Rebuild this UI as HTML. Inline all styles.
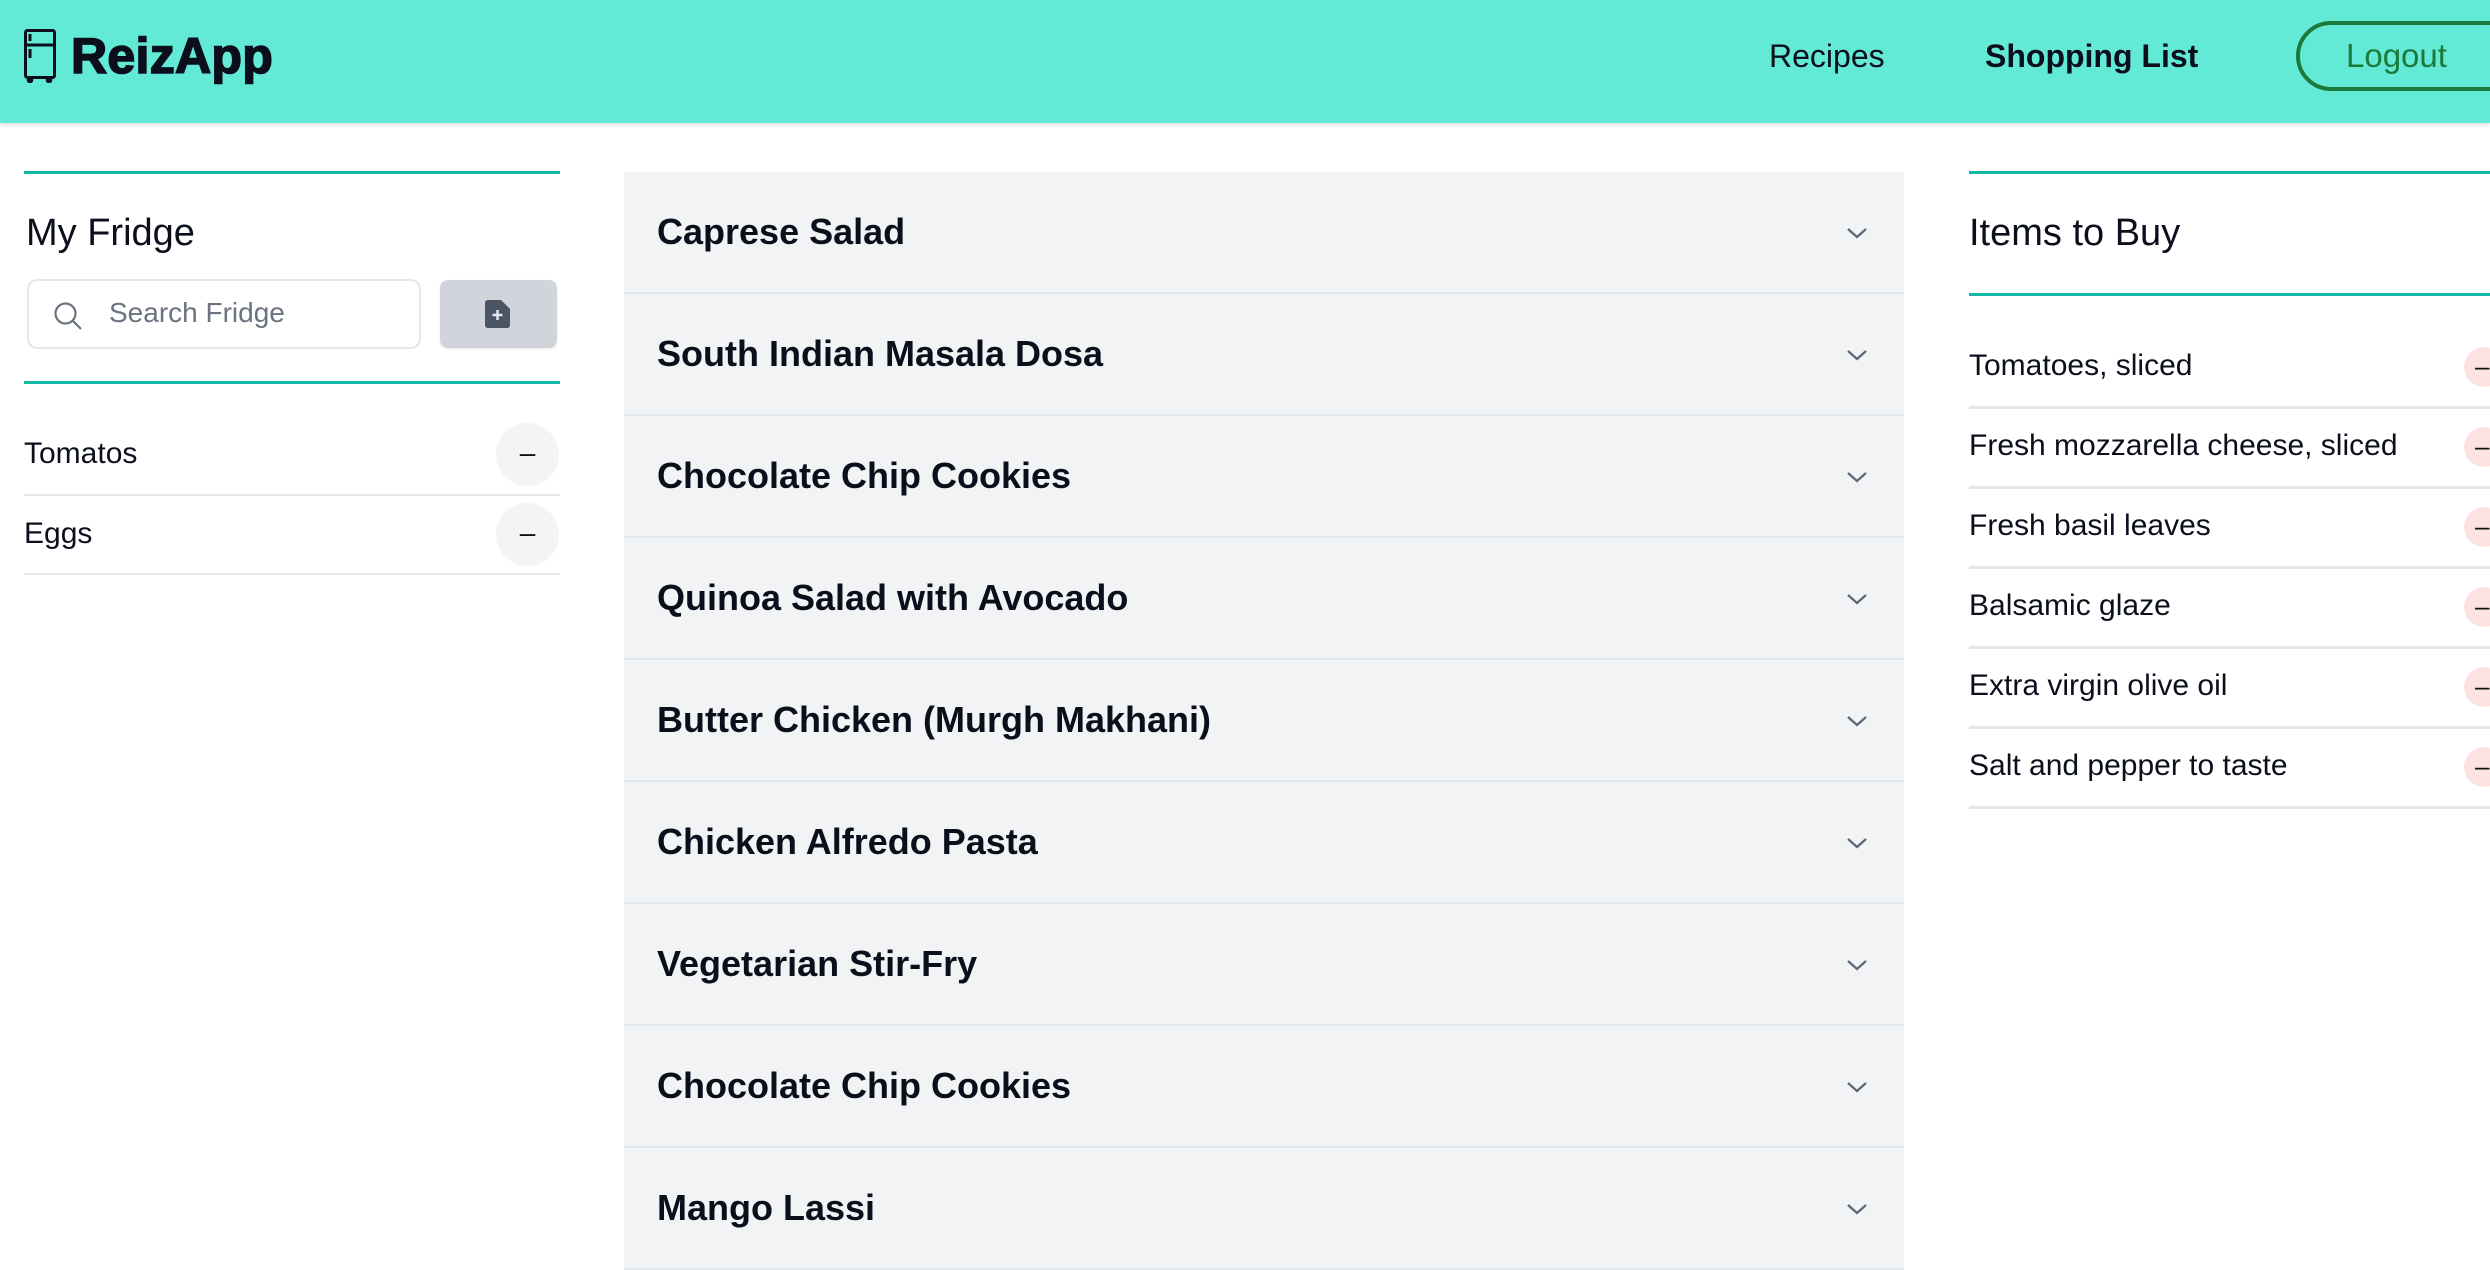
<!DOCTYPE html>
<html><head><meta charset="utf-8"><style>
*{margin:0;padding:0;box-sizing:border-box}
body{width:2490px;height:1268px;overflow:hidden;background:#fff;font-family:"Liberation Sans",Arial,sans-serif;color:#111827;position:relative}
.abs{position:absolute}
header{position:absolute;left:0;top:0;width:2490px;height:123px;background:#62ead7;box-shadow:0 2px 4px rgba(0,0,0,.12)}
.logo{left:71px;top:26px;font-size:50px;font-weight:bold;line-height:60px;color:#0b0f1c;-webkit-text-stroke:1.6px #0b0f1c;letter-spacing:0.3px}
.nav{top:38px;font-size:32px;line-height:36px;color:#0b0f1c}
.logout{left:2296px;top:21px;width:270px;height:70px;border:4px solid #1b7a3a;border-radius:36px;color:#1b7a3a;font-size:33px;line-height:62px;padding-left:46px}
.teal{height:3px;background:#14b8a6}
.h2{font-size:38px;line-height:40px;color:#0b0f1c}
.search{left:27px;top:279px;width:394px;height:70px;border:2px solid #e5e7eb;border-radius:10px}
.search span{position:absolute;left:80px;top:16px;font-size:28px;color:#6b7280}
.btn{left:440px;top:280px;width:117px;height:68px;background:#d1d5db;border-radius:8px;box-shadow:0 1px 2px rgba(0,0,0,.1)}
.frow{left:24px;width:536px;height:2px;background:#e5e7eb}
.ftext{left:24px;font-size:30px;line-height:32px;color:#0b0f1c}
.fcirc{left:496px;width:63px;height:63px;border-radius:50%;background:#f3f4f6;font-size:28px;text-align:center;line-height:60px;color:#111}
.mid{left:624px;top:172px;width:1280px;height:1096px;background:#f2f3f5}
.row{position:relative;height:122px;border-bottom:2px solid #e3e7ee}
.row span{position:absolute;left:33px;top:40px;font-size:36px;font-weight:bold;line-height:40px;color:#0b0f1c}
.row svg{position:absolute;left:1222px;top:54px}
.rtext{left:1969px;font-size:30px;line-height:32px;color:#0b0f1c}
.rsep{left:1969px;width:530px;height:3px;background:#e5e7eb}
.rcirc{left:2464px;width:40px;height:40px;border-radius:50%;background:#fde2e2;font-size:26px;line-height:38px;padding-left:11px;color:#111}
</style></head><body>
<header>
<svg class="abs" style="left:24px;top:29px" width="32" height="54" viewBox="0 0 32 54" fill="none" stroke="#0b0f1c" stroke-width="3">
<rect x="1.5" y="1.5" width="29" height="47" rx="2"/><line x1="1.5" y1="16" x2="30.5" y2="16"/>
<line x1="6" y1="5" x2="6" y2="12"/><line x1="6" y1="20" x2="6" y2="29"/>
<circle cx="6" cy="51" r="1.8" fill="#0b0f1c"/><circle cx="25" cy="51" r="1.8" fill="#0b0f1c"/></svg>
<div class="abs logo">ReizApp</div>
<div class="abs nav" style="left:1769px">Recipes</div>
<div class="abs nav" style="left:1985px;font-weight:bold">Shopping List</div>
<div class="abs logout">Logout</div>
</header>

<div class="abs teal" style="left:24px;top:171px;width:536px"></div>
<div class="abs h2" style="left:26px;top:213px">My Fridge</div>
<div class="abs search">
<svg class="abs" style="left:24px;top:20px" width="30" height="30" viewBox="0 0 30 30" fill="none" stroke="#6b7280" stroke-width="2.2"><circle cx="12.5" cy="12.5" r="10"/><line x1="20" y1="20" x2="28" y2="28"/></svg>
<span>Search Fridge</span></div>
<div class="abs btn"><svg class="abs" style="left:45px;top:20px" width="26" height="28" viewBox="0 0 26 28"><path d="M3 0H16L25 9V25Q25 28 22 28H3Q0 28 0 25V3Q0 0 3 0Z" fill="#4b5563"/><path d="M12.5 10V20M7.5 15H17.5" stroke="#e5e7eb" stroke-width="2.5"/></svg></div>
<div class="abs teal" style="left:24px;top:381px;width:536px"></div>

<div class="abs ftext" style="top:438px">Tomatos</div>
<div class="abs fcirc" style="top:423px">–</div>
<div class="abs frow" style="top:494px"></div>
<div class="abs ftext" style="top:518px">Eggs</div>
<div class="abs fcirc" style="top:503px">–</div>
<div class="abs frow" style="top:573px"></div>

<div class="abs mid">
<div class="row"><span>Caprese Salad</span><svg width="22" height="14" viewBox="0 0 22 14"><path d="M2 3L11 11L20 3" fill="none" stroke="#5b6778" stroke-width="2.2"/></svg></div>
<div class="row"><span>South Indian Masala Dosa</span><svg width="22" height="14" viewBox="0 0 22 14"><path d="M2 3L11 11L20 3" fill="none" stroke="#5b6778" stroke-width="2.2"/></svg></div>
<div class="row"><span>Chocolate Chip Cookies</span><svg width="22" height="14" viewBox="0 0 22 14"><path d="M2 3L11 11L20 3" fill="none" stroke="#5b6778" stroke-width="2.2"/></svg></div>
<div class="row"><span>Quinoa Salad with Avocado</span><svg width="22" height="14" viewBox="0 0 22 14"><path d="M2 3L11 11L20 3" fill="none" stroke="#5b6778" stroke-width="2.2"/></svg></div>
<div class="row"><span>Butter Chicken (Murgh Makhani)</span><svg width="22" height="14" viewBox="0 0 22 14"><path d="M2 3L11 11L20 3" fill="none" stroke="#5b6778" stroke-width="2.2"/></svg></div>
<div class="row"><span>Chicken Alfredo Pasta</span><svg width="22" height="14" viewBox="0 0 22 14"><path d="M2 3L11 11L20 3" fill="none" stroke="#5b6778" stroke-width="2.2"/></svg></div>
<div class="row"><span>Vegetarian Stir-Fry</span><svg width="22" height="14" viewBox="0 0 22 14"><path d="M2 3L11 11L20 3" fill="none" stroke="#5b6778" stroke-width="2.2"/></svg></div>
<div class="row"><span>Chocolate Chip Cookies</span><svg width="22" height="14" viewBox="0 0 22 14"><path d="M2 3L11 11L20 3" fill="none" stroke="#5b6778" stroke-width="2.2"/></svg></div>
<div class="row"><span>Mango Lassi</span><svg width="22" height="14" viewBox="0 0 22 14"><path d="M2 3L11 11L20 3" fill="none" stroke="#5b6778" stroke-width="2.2"/></svg></div>
</div>

<div class="abs teal" style="left:1969px;top:171px;width:530px"></div>
<div class="abs h2" style="left:1969px;top:213px">Items to Buy</div>
<div class="abs teal" style="left:1969px;top:293px;width:530px"></div>

<div class="abs rtext" style="top:350px">Tomatoes, sliced</div><div class="abs rcirc" style="top:347px">–</div>
<div class="abs rsep" style="top:406px"></div>
<div class="abs rtext" style="top:430px">Fresh mozzarella cheese, sliced</div><div class="abs rcirc" style="top:427px">–</div>
<div class="abs rsep" style="top:486px"></div>
<div class="abs rtext" style="top:510px">Fresh basil leaves</div><div class="abs rcirc" style="top:507px">–</div>
<div class="abs rsep" style="top:566px"></div>
<div class="abs rtext" style="top:590px">Balsamic glaze</div><div class="abs rcirc" style="top:587px">–</div>
<div class="abs rsep" style="top:646px"></div>
<div class="abs rtext" style="top:670px">Extra virgin olive oil</div><div class="abs rcirc" style="top:667px">–</div>
<div class="abs rsep" style="top:726px"></div>
<div class="abs rtext" style="top:750px">Salt and pepper to taste</div><div class="abs rcirc" style="top:747px">–</div>
<div class="abs rsep" style="top:806px"></div>
</body></html>
